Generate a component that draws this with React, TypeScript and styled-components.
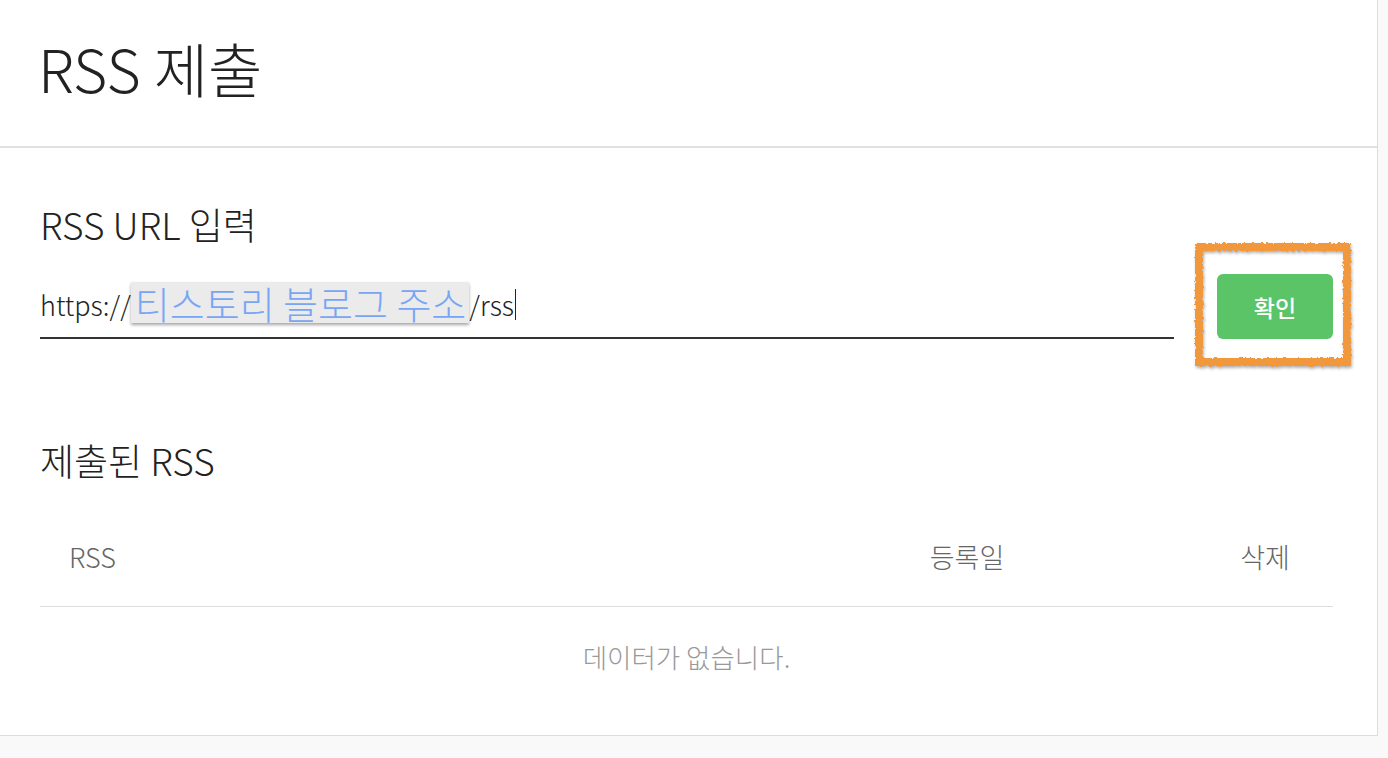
import React from 'react';
import styled, {createGlobalStyle} from 'styled-components';

const GlobalStyle = createGlobalStyle`
  html, body {
    margin: 0;
    padding: 0;
    background: #f9f9f9;
  }
  body {
    font-family: "Noto Sans CJK KR", "Noto Sans", sans-serif;
    font-weight: 300;
    color: #222;
  }
`;

const App = () => {
    return (
        <>
            <GlobalStyle/>
            <RoughFilter aria-hidden="true">
                <defs>
                    <filter id="rough-edge">
                        <feTurbulence type="fractalNoise" baseFrequency="0.35" numOctaves="2" seed="4"/>
                        <feDisplacementMap in="SourceGraphic" scale="4"/>
                        <feDropShadow dx="1" dy="2" stdDeviation="1.5" floodColor="#000" floodOpacity="0.3"/>
                    </filter>
                </defs>
            </RoughFilter>
            <Panel>
                <Header>
                    <Title>RSS 제출</Title>
                </Header>
                <Body>
                    <SectionTitle>RSS URL 입력</SectionTitle>
                    <InputRow>
                        <UrlInput>
                            https://
                            <Highlight>티스토리 블로그 주소</Highlight>
                            /rss
                            <Caret/>
                        </UrlInput>
                        <Annotation>
                            <SubmitButton>확인</SubmitButton>
                        </Annotation>
                    </InputRow>

                    <SectionTitle $spaced>제출된 RSS</SectionTitle>
                    <Table>
                        <HeadRow>
                            <HeadCell $align="left">RSS</HeadCell>
                            <HeadCell>등록일</HeadCell>
                            <HeadCell>삭제</HeadCell>
                        </HeadRow>
                        <EmptyRow>데이터가 없습니다.</EmptyRow>
                    </Table>
                </Body>
            </Panel>
        </>
    );
};

export default App;

const RoughFilter = styled.svg`
  position: absolute;
  width: 0;
  height: 0;
`;

const Panel = styled.div`
  width: 1377px;
  background: #fff;
  border-right: 1px solid #ddd;
  border-bottom: 1px solid #ddd;
`;

const Header = styled.div`
  height: 146px;
  display: flex;
  align-items: center;
  padding-left: 38px;
  border-bottom: 2px solid #e0e0e0;
`;

const Title = styled.h1`
  margin: 0;
  font-size: 59px;
  font-weight: 300;
  line-height: 1;
  color: #222;
  padding-bottom: 12px;
`;

const Body = styled.div`
  padding: 54px 44px 60px 40px;
`;

const SectionTitle = styled.h2<{ $spaced?: boolean }>`
  margin: ${({$spaced}) => ($spaced ? '99px' : '0')} 0 0;
  font-size: 37px;
  font-weight: 300;
  line-height: 45px;
  color: #222;
`;

const InputRow = styled.div`
  margin-top: 24px;
  display: flex;
  align-items: center;
  gap: 21px;
`;

const UrlInput = styled.div`
  flex: 1;
  height: 66px;
  display: flex;
  align-items: center;
  border-bottom: 2px solid #333;
  font-size: 27px;
  color: #222;
  white-space: pre;
`;

const Highlight = styled.span`
  font-size: 38px;
  line-height: 41px;
  padding: 0 3px 0 4px;
  margin-top: -4px;
  color: #78a6f5;
  background: #ebebeb;
  box-shadow: 0 2px 3px rgba(0, 0, 0, 0.35);
`;

const Caret = styled.span`
  display: inline-block;
  width: 1px;
  height: 31px;
  margin-left: 1px;
  background: #222;
`;

const Annotation = styled.div`
  position: relative;
  margin: -28px -18px -27px 0;
  padding: 31px 18px 27px 22px;

  &::after {
    content: '';
    position: absolute;
    inset: 0;
    border: 8px solid #f0983a;
    filter: url(#rough-edge);
    pointer-events: none;
  }
`;

const SubmitButton = styled.button`
  width: 116px;
  height: 65px;
  border: none;
  border-radius: 6px;
  background: #5bc467;
  color: #fff;
  font-family: "Noto Sans CJK KR", "Noto Sans", sans-serif;
  font-size: 23px;
  font-weight: 500;
  cursor: pointer;
`;

const Table = styled.div`
  margin-top: 24px;
`;

const HeadRow = styled.div`
  height: 99px;
  display: grid;
  grid-template-columns: 1fr 460px 136px;
  align-items: center;
  border-bottom: 1px solid #ddd;
`;

const HeadCell = styled.div<{ $align?: 'left' | 'center' }>`
  text-align: ${({$align}) => $align || 'center'};
  padding-left: ${({$align}) => ($align === 'left' ? '29px' : '0')};
  font-size: 27px;
  color: #666;
`;

const EmptyRow = styled.div`
  padding-top: 32px;
  text-align: center;
  font-size: 26.5px;
  line-height: 36px;
  color: #999;
`;
